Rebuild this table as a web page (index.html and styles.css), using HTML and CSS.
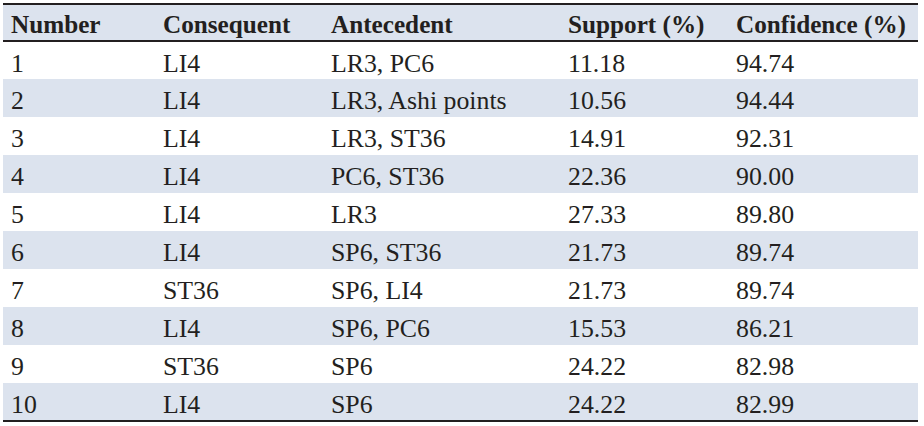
FILE: index.html
```html
<!DOCTYPE html>
<html>
<head>
<meta charset="utf-8">
<link rel="stylesheet" href="styles.css">
</head>
<body>
<table class="rules">
  <colgroup>
    <col class="c1"><col class="c2"><col class="c3"><col class="c4"><col class="c5">
  </colgroup>
  <thead>
    <tr><th>Number</th><th>Consequent</th><th>Antecedent</th><th>Support (%)</th><th>Confidence (%)</th></tr>
  </thead>
  <tbody>
    <tr><td>1</td><td>LI4</td><td>LR3, PC6</td><td>11.18</td><td>94.74</td></tr>
    <tr><td>2</td><td>LI4</td><td>LR3, Ashi points</td><td>10.56</td><td>94.44</td></tr>
    <tr><td>3</td><td>LI4</td><td>LR3, ST36</td><td>14.91</td><td>92.31</td></tr>
    <tr><td>4</td><td>LI4</td><td>PC6, ST36</td><td>22.36</td><td>90.00</td></tr>
    <tr><td>5</td><td>LI4</td><td>LR3</td><td>27.33</td><td>89.80</td></tr>
    <tr><td>6</td><td>LI4</td><td>SP6, ST36</td><td>21.73</td><td>89.74</td></tr>
    <tr><td>7</td><td>ST36</td><td>SP6, LI4</td><td>21.73</td><td>89.74</td></tr>
    <tr><td>8</td><td>LI4</td><td>SP6, PC6</td><td>15.53</td><td>86.21</td></tr>
    <tr><td>9</td><td>ST36</td><td>SP6</td><td>24.22</td><td>82.98</td></tr>
    <tr><td>10</td><td>LI4</td><td>SP6</td><td>24.22</td><td>82.99</td></tr>
  </tbody>
</table>
</body>
</html>
```
FILE: styles.css
```css
html, body {
  margin: 0;
  padding: 0;
  background: #ffffff;
}
body {
  padding: 3px 0 0 3px;
  font-family: "Liberation Serif", "Times New Roman", serif;
  color: #231f20;
}
.rules {
  border-collapse: collapse;
  width: 915px;
  table-layout: fixed;
  font-size: 25.8px;
  border-top: 2px solid #231f20;
  border-bottom: 2px solid #231f20;
}
.c1 { width: 152px; }
.c2 { width: 168px; }
.c3 { width: 237px; }
.c4 { width: 168px; }
.c5 { width: 190px; }
.rules th, .rules td {
  text-align: left;
  padding: 0 0 0 8px;
  white-space: nowrap;
  vertical-align: top;
}
.rules th {
  font-weight: bold;
  font-size: 25.2px;
  height: 37px;
  box-sizing: border-box;
  padding-top: 5px;
  line-height: 30px;
}
.rules thead tr {
  background: #dce3ee;
  border-bottom: 2px solid #231f20;
}
.rules td {
  height: 38px;
  box-sizing: border-box;
  padding-top: 7px;
  line-height: 30px;
}
.rules tbody tr:nth-child(even) {
  background: #dce3ee;
}
```
